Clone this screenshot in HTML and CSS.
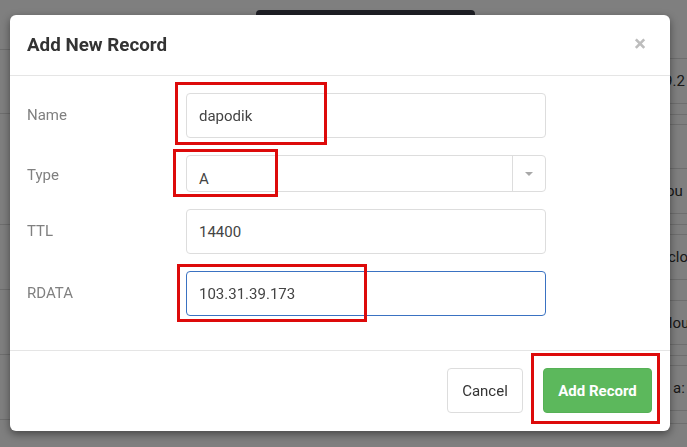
FILE: index.html
```html
<!DOCTYPE html>
<html lang="en">
<head>
<meta charset="utf-8">
<title>Add New Record</title>
<link rel="stylesheet" href="styles.css">
</head>
<body>
<div class="page">
  <div class="toast"></div>
  <div class="col col-left">
    <div class="spacer s49"></div>
    <div class="row h64"></div>
    <div class="row h111"></div>
    <div class="row h65"></div>
    <div class="row h65"></div>
    <div class="row h65"></div>
    <div class="row h30"></div>
  </div>
  <div class="col col-right">
    <div class="spacer s58"></div>
    <div class="row h45 cell p4">9.2</div>
    <div class="row h11"></div>
    <div class="row h10"></div>
    <div class="row h44"></div>
    <div class="row h45 cell p6">ou</div>
    <div class="row h11"></div>
    <div class="row h10"></div>
    <div class="row h45 cell p8">clo</div>
    <div class="row h21"></div>
    <div class="row h44 cell p1">clou</div>
    <div class="row h11"></div>
    <div class="row h10"></div>
    <div class="row h45 cell p13">a:</div>
    <div class="row h13"></div>
    <div class="row h30"></div>
  </div>
</div>

<div class="backdrop"></div>

<div class="modal">
  <div class="modal-header">
    <h4 class="modal-title">Add New Record</h4>
    <span class="close">&times;</span>
  </div>
  <form class="modal-body">
    <div class="form-row">
      <label class="form-label">Name</label>
      <div class="field">
        <input class="input" type="text" value="dapodik">
        <span class="mark mark-name"></span>
      </div>
    </div>
    <div class="form-row row-select">
      <label class="form-label">Type</label>
      <div class="field">
        <div class="select">
          <span class="select-value">A</span>
          <span class="select-arrow"><span class="caret"></span></span>
        </div>
        <span class="mark mark-type"></span>
      </div>
    </div>
    <div class="form-row">
      <label class="form-label">TTL</label>
      <div class="field">
        <input class="input" type="text" value="14400">
      </div>
    </div>
    <div class="form-row">
      <label class="form-label">RDATA</label>
      <div class="field">
        <input class="input focus" type="text" value="103.31.39.173">
        <span class="mark mark-rdata"></span>
      </div>
    </div>
  </form>
  <div class="modal-footer">
    <button class="btn btn-default" type="button">Cancel</button>
    <div class="btn-wrap">
      <button class="btn btn-success" type="button">Add Record</button>
      <span class="mark mark-add"></span>
    </div>
  </div>
</div>
</body>
</html>
```

FILE: styles.css
```css
* { box-sizing: border-box; }

html, body {
  margin: 0;
  padding: 0;
  height: 100%;
}

body {
  font-family: Roboto, "Liberation Sans", Arial, sans-serif;
  background: #ffffff;
  color: #333333;
  overflow: hidden;
}

/* ---------- page behind the dialog ---------- */
.page {
  position: relative;
  display: grid;
  grid-template-columns: 660px 1fr;
  height: 447px;
  background: #ffffff;
}

.toast {
  position: absolute;
  left: 256px;
  top: 10px;
  width: 219px;
  height: 40px;
  background: #3d3f4b;
  border-radius: 4px;
}

.col {
  display: flex;
  flex-direction: column;
}

.row {
  border-top: 1px solid #dddddd;
  flex: none;
}

.spacer { flex: none; }
.s49 { height: 49px; }
.s58 { height: 58px; }

.h10 { height: 10px; }
.h11 { height: 11px; }
.h13 { height: 13px; }
.h21 { height: 21px; }
.h30 { height: 30px; }
.h44 { height: 44px; }
.h45 { height: 45px; }
.h64 { height: 64px; }
.h65 { height: 65px; }
.h111 { height: 111px; }

.cell {
  display: flex;
  align-items: center;
  font-size: 15px;
  color: #333333;
  white-space: nowrap;
}

.p1 { padding-left: 1px; }
.p4 { padding-left: 4px; }
.p6 { padding-left: 6px; }
.p8 { padding-left: 8px; }
.p13 { padding-left: 13px; }

.backdrop {
  position: fixed;
  inset: 0;
  background: rgba(0, 0, 0, 0.5);
}

/* ---------- dialog ---------- */
.modal {
  position: absolute;
  left: 10px;
  top: 15px;
  width: 660px;
  background: #ffffff;
  border-radius: 6px;
  box-shadow: 0 3px 9px rgba(0, 0, 0, 0.45);
}

.modal-header {
  display: flex;
  align-items: center;
  justify-content: space-between;
  height: 61px;
  padding: 0 24px 0 17px;
  border-bottom: 1px solid #e5e5e5;
}

.modal-title {
  margin: 0;
  font-size: 18.8px;
  font-weight: 700;
  color: #333333;
}

.close {
  font-size: 22px;
  font-weight: 700;
  color: #bdbdbd;
  line-height: 1;
  margin-top: -2px;
}

.modal-body {
  display: flex;
  flex-direction: column;
  gap: 17px;
  padding: 17px 17px 34px;
  margin: 0;
}

.form-row {
  display: grid;
  grid-template-columns: 159px 360px;
  align-items: center;
}

.form-label {
  font-size: 15px;
  color: #808080;
  margin-top: -2px;
}

.row-select .form-label {
  margin-top: 3px;
}

.field {
  position: relative;
}

.input {
  display: block;
  width: 100%;
  height: 45px;
  padding: 0 12px;
  border: 1px solid #dddddd;
  border-radius: 4px;
  font-family: inherit;
  font-size: 15px;
  color: #444444;
  background: #ffffff;
  outline: none;
}

.input.focus {
  border-color: #3a72c2;
}

.select {
  display: flex;
  height: 37px;
  border: 1px solid #dddddd;
  border-radius: 4px;
  background: #ffffff;
}

.select-value {
  flex: 1;
  padding: 13px 0 0 12px;
  font-size: 15px;
  color: #444444;
  line-height: 20px;
}

.select-arrow {
  width: 33px;
  border-left: 1px solid #dddddd;
  display: flex;
  align-items: center;
  justify-content: center;
}

.caret {
  width: 0;
  height: 0;
  border-left: 4px solid transparent;
  border-right: 4px solid transparent;
  border-top: 4px solid #a8a8a8;
}

.modal-footer {
  display: flex;
  justify-content: flex-end;
  align-items: center;
  gap: 20px;
  padding: 17px 18px 18px;
  border-top: 1px solid #e5e5e5;
}

.btn {
  height: 45px;
  border-radius: 4px;
  font-family: inherit;
  font-size: 15px;
  cursor: pointer;
}

.btn-default {
  width: 76px;
  background: #ffffff;
  border: 1px solid #dddddd;
  color: #333333;
}

.btn-success {
  width: 109px;
  background: #5cb85c;
  border: 1px solid #56b156;
  color: #ffffff;
  font-weight: 700;
}

.btn-wrap {
  position: relative;
  display: flex;
}

/* ---------- red annotation boxes ---------- */
.mark {
  position: absolute;
  border: 3px solid #dd0a0a;
  pointer-events: none;
}

.mark-name {
  left: -11px;
  top: -11px;
  width: 152px;
  height: 63px;
}

.mark-type {
  left: -13px;
  top: -6px;
  width: 105px;
  height: 48px;
}

.mark-rdata {
  left: -9px;
  top: -7px;
  width: 190px;
  height: 58px;
}

.mark-add {
  left: -12px;
  top: -15px;
  width: 129px;
  height: 71px;
}
```
